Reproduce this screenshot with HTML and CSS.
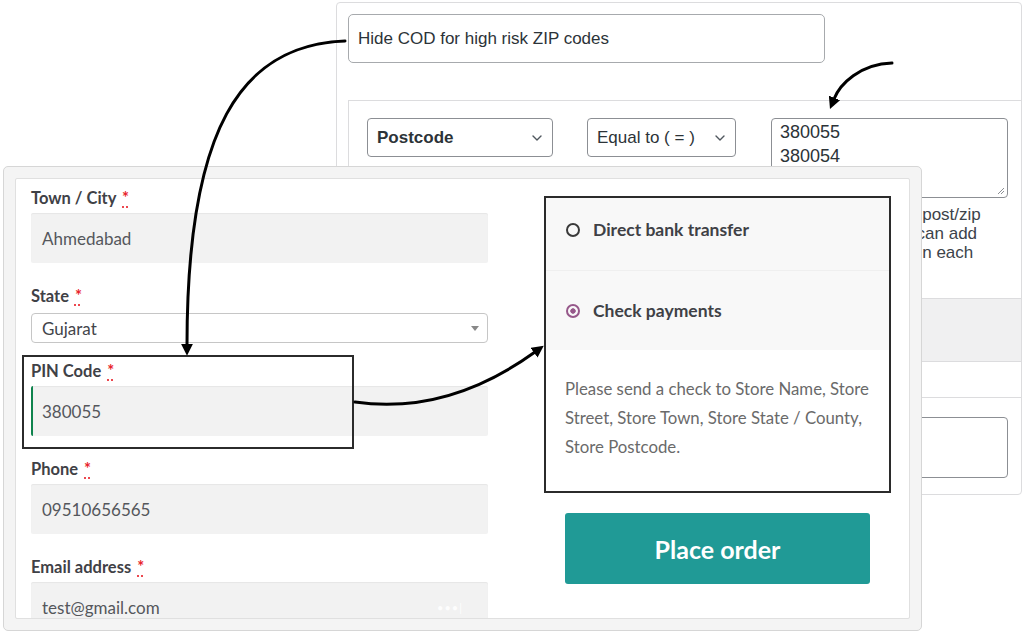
FILE: index.html
```html
<!DOCTYPE html>
<html lang="en">
<head>
<meta charset="utf-8">
<title>Hide COD for high risk ZIP codes</title>
<link rel="stylesheet" href="styles.css">
</head>
<body>
<div class="stage">

  <section class="rules-panel">
    <div class="title-input">Hide COD for high risk ZIP codes</div>
    <div class="rule-box">
      <div class="rule-row">
        <div class="wp-select wp-select--field">
          <span>Postcode</span>
          <svg class="chev" width="10" height="6" viewBox="0 0 10 6"><path d="M1 1l4 4 4-4" fill="none" stroke="#50575e" stroke-width="1.4" stroke-linecap="round" stroke-linejoin="round"/></svg>
        </div>
        <div class="wp-select wp-select--op">
          <span>Equal to ( = )</span>
          <svg class="chev" width="10" height="6" viewBox="0 0 10 6"><path d="M1 1l4 4 4-4" fill="none" stroke="#50575e" stroke-width="1.4" stroke-linecap="round" stroke-linejoin="round"/></svg>
        </div>
        <div class="codes-col">
          <div class="codes-area">
            <div>380055</div>
            <div>380054</div>
            <svg class="resize-grip" width="8" height="8" viewBox="0 0 8 8"><path d="M7 1L1 7M7 4L4 7" stroke="#8c8f94" stroke-width="1" fill="none"/></svg>
          </div>
          <p class="codes-help">Enter your high risk post/zip<br>codes in a list. You can add<br>several codes, one in each<br>line.</p>
        </div>
      </div>
      <div class="rule-band"></div>
      <div class="rule-gap"></div>
      <div class="rule-input"></div>
    </div>
  </section>

  <section class="checkout">
    <div class="checkout-inner">
      <div class="billing">
        <div class="field">
          <div class="field-label">Town / City <abbr class="req" title="required">*</abbr></div>
          <div class="field-input">Ahmedabad</div>
        </div>
        <div class="field field--state">
          <div class="field-label">State <abbr class="req" title="required">*</abbr></div>
          <div class="field-select"><span>Gujarat</span><span class="select-arrow"></span></div>
        </div>
        <div class="field">
          <div class="field-label">PIN Code <abbr class="req" title="required">*</abbr></div>
          <div class="field-input field-input--valid">380055</div>
        </div>
        <div class="field">
          <div class="field-label">Phone <abbr class="req" title="required">*</abbr></div>
          <div class="field-input">09510656565</div>
        </div>
        <div class="field">
          <div class="field-label">Email address <abbr class="req" title="required">*</abbr></div>
          <div class="field-input field-input--email"><span>test@gmail.com</span><span class="pm-icon">•••|</span></div>
        </div>
      </div>

      <div class="payment-col">
        <div class="payment-box">
          <ul class="methods">
            <li class="method method--first"><span class="radio"></span>Direct bank transfer</li>
            <li class="method method--second"><span class="radio radio--checked"></span>Check payments</li>
          </ul>
          <p class="method-desc">Please send a check to Store Name, Store<br>Street, Store Town, Store State / County,<br>Store Postcode.</p>
        </div>
        <button class="place-order" type="button">Place order</button>
      </div>
    </div>
  </section>

  <div class="pin-highlight"></div>

  <svg class="arrows" width="1024" height="634" viewBox="0 0 1024 634">
    <defs>
      <marker id="head" viewBox="0 0 10 10" refX="1" refY="5" markerWidth="4" markerHeight="4" orient="auto" markerUnits="strokeWidth">
        <path d="M0 0L10 5L0 10z" fill="#000"/>
      </marker>
    </defs>
    <path d="M345 41C240 45 187 130 187 345" fill="none" stroke="#000" stroke-width="3" stroke-linecap="round" marker-end="url(#head)"/>
    <path d="M355 402C425 412 485 388 535 352" fill="none" stroke="#000" stroke-width="3" stroke-linecap="round" marker-end="url(#head)"/>
    <path d="M892 63C860 64 840 84 834 99" fill="none" stroke="#000" stroke-width="3" stroke-linecap="round" marker-end="url(#head)"/>
  </svg>

</div>
</body>
</html>
```

FILE: styles.css
```css
html, body {
  margin: 0;
  padding: 0;
  background: #fff;
}

.stage {
  position: relative;
  width: 1024px;
  height: 634px;
  overflow: hidden;
  background: #fff;
}

/* ---------- back panel (rule editor) ---------- */
.rules-panel {
  position: absolute;
  left: 336px;
  top: 2px;
  width: 686px;
  box-sizing: border-box;
  display: flex;
  flex-direction: column;
  padding: 11px 0 16px 11px;
  border: 1px solid #dcdcde;
  border-radius: 4px;
  background: #fff;
  font-family: "Liberation Sans", Arial, sans-serif;
  color: #2c3338;
}

.title-input {
  width: 477px;
  height: 49px;
  box-sizing: border-box;
  display: flex;
  align-items: center;
  padding: 0 9px;
  border: 1px solid #a7aaad;
  border-radius: 5px;
  font-size: 17px;
}

.rule-box {
  margin-top: 37px;
  border-top: 1px solid #dcdcde;
  border-left: 1px solid #dcdcde;
}

.rule-row {
  display: flex;
  align-items: flex-start;
  gap: 34px;
  padding: 17px 0 17px 18px;
}

.wp-select {
  height: 39px;
  box-sizing: border-box;
  display: flex;
  align-items: center;
  justify-content: space-between;
  padding: 0 10px 0 9px;
  border: 1px solid #8c8f94;
  border-radius: 4px;
  font-size: 17px;
}

.wp-select--field {
  width: 186px;
  font-weight: 700;
}

.wp-select--op {
  width: 149px;
}

.chev {
  display: block;
}

.codes-col {
  width: 237px;
  margin-left: 1px;
}

.codes-area {
  position: relative;
  height: 80px;
  box-sizing: border-box;
  padding: 1px 8px 0;
  border: 1px solid #8c8f94;
  border-radius: 4px;
  font-size: 18px;
  line-height: 24px;
}

.resize-grip {
  position: absolute;
  right: 2px;
  bottom: 2px;
}

.codes-help {
  margin: 7px 0 0;
  font-size: 17px;
  line-height: 19px;
  color: #3c434a;
  white-space: nowrap;
}

.rule-band {
  height: 62px;
  background: #f0f0f1;
  border-top: 1px solid #dcdcde;
  border-bottom: 1px solid #dcdcde;
}

.rule-gap {
  height: 35px;
  border-bottom: 1px solid #dcdcde;
}

.rule-input {
  height: 61px;
  box-sizing: border-box;
  margin: 19px 13px 0 18px;
  border: 1px solid #8c8f94;
  border-radius: 4px;
}

/* ---------- front panel (checkout) ---------- */
.checkout {
  position: absolute;
  left: 3px;
  top: 166px;
  width: 919px;
  height: 465px;
  box-sizing: border-box;
  padding: 11px;
  border: 1px solid #d6d6d6;
  border-radius: 5px;
  background: #f4f4f4;
  font-family: Lato, "Noto Sans", sans-serif;
}

.checkout-inner {
  height: 100%;
  box-sizing: border-box;
  display: flex;
  align-items: flex-start;
  gap: 56px;
  padding: 9px 18px 0 15px;
  border: 1px solid #e0e0e0;
  border-radius: 2px;
  background: #fff;
  overflow: hidden;
}

.billing {
  width: 457px;
  flex: none;
  display: flex;
  flex-direction: column;
  gap: 23px;
}

.field {
  display: flex;
  flex-direction: column;
  gap: 5px;
}

.field--state {
  gap: 7px;
  margin-bottom: -5px;
}

.field-label {
  font-size: 16.5px;
  line-height: 20px;
  font-weight: 700;
  color: #3f4146;
}

.req {
  margin-left: 2px;
  color: #e8232b;
  font-weight: 700;
  text-decoration: underline dotted #e8232b;
  text-underline-offset: 3px;
  border: 0;
}

.field-input {
  height: 50px;
  box-sizing: border-box;
  display: flex;
  align-items: center;
  justify-content: space-between;
  padding: 0 11px;
  border-radius: 2px;
  background: #f2f2f2;
  box-shadow: inset 0 1px 1px rgba(0, 0, 0, 0.05);
  font-size: 17px;
  color: #55575c;
}

.field-input--valid {
  border-left: 2px solid #0f834d;
  padding-left: 9px;
}

.pm-icon {
  margin-right: 14px;
  font-size: 11px;
  letter-spacing: 1px;
  color: rgba(255, 255, 255, 0.9);
}

.field-select {
  height: 30px;
  box-sizing: border-box;
  display: flex;
  align-items: center;
  justify-content: space-between;
  padding: 0 8px 0 10px;
  border: 1px solid #c6c6c6;
  border-radius: 4px;
  background: #fff;
  font-size: 17px;
  color: #43454b;
}

.select-arrow {
  width: 0;
  height: 0;
  border-left: 4.5px solid transparent;
  border-right: 4.5px solid transparent;
  border-top: 5px solid #888;
}

.payment-col {
  width: 347px;
  flex: none;
  padding-top: 8px;
  display: flex;
  flex-direction: column;
  align-items: center;
}

.payment-box {
  width: 100%;
  box-sizing: border-box;
  border: 2px solid #2b2b2b;
}

.methods {
  list-style: none;
  margin: 0;
  padding: 0;
  background: #f8f8f8;
}

.method {
  display: flex;
  align-items: center;
  gap: 13px;
  padding: 30px 20px;
  font-size: 17.5px;
  line-height: 20px;
  font-weight: 700;
  color: #3f4146;
}

.method--first {
  padding-top: 22px;
}

.method--second {
  padding-bottom: 29px;
  border-top: 1px solid #efefef;
}

.radio {
  width: 14px;
  height: 14px;
  box-sizing: border-box;
  flex: none;
  border: 2px solid #3a3a3a;
  border-radius: 50%;
}

.radio--checked {
  border-color: #96588a;
  background: radial-gradient(circle, #96588a 0 2.4px, transparent 3px);
}

.method-desc {
  margin: 0;
  padding: 24px 19px 30px;
  font-size: 16.8px;
  line-height: 29px;
  color: #6a6a6a;
  white-space: nowrap;
}

.place-order {
  margin-top: 20px;
  width: 305px;
  height: 71px;
  border: 0;
  border-radius: 3px;
  background: #209a96;
  color: #fff;
  font-family: Lato, "Noto Sans", sans-serif;
  font-size: 25px;
  font-weight: 700;
}

/* ---------- annotations ---------- */
.pin-highlight {
  position: absolute;
  left: 22px;
  top: 355px;
  width: 332px;
  height: 94px;
  box-sizing: border-box;
  border: 2px solid #2b2b2b;
}

.arrows {
  position: absolute;
  left: 0;
  top: 0;
  pointer-events: none;
}
```
